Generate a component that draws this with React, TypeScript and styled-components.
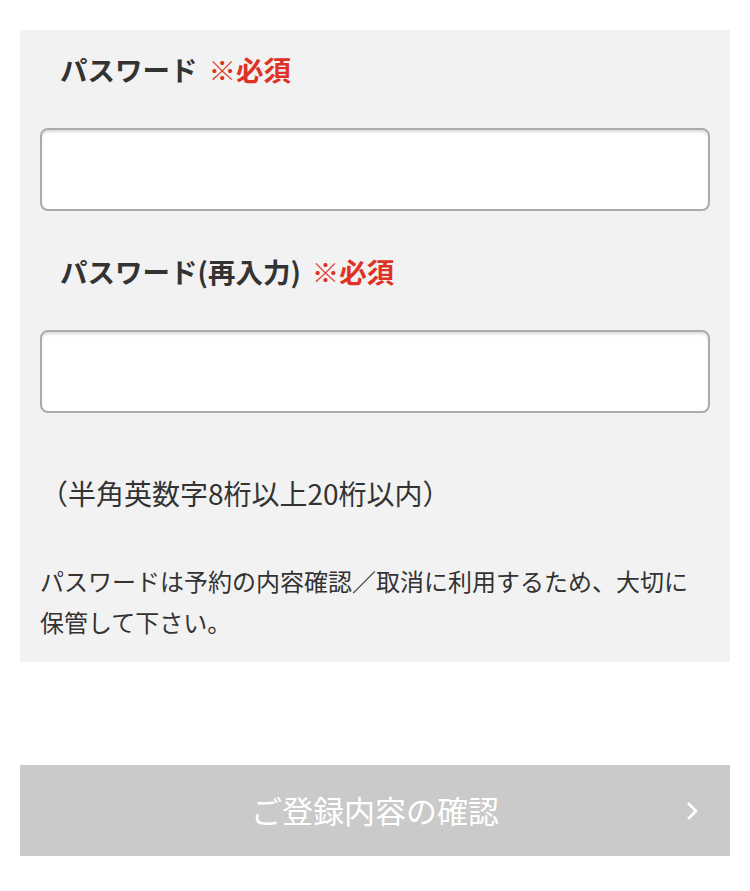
import React from "react";
import styled, { createGlobalStyle } from "styled-components";

const GlobalStyle = createGlobalStyle`
  html, body {
    margin: 0;
    padding: 0;
    background: #ffffff;
  }
  body {
    font-family: "Noto Sans CJK JP", "Noto Sans", sans-serif;
    color: #333333;
  }
  * {
    box-sizing: border-box;
  }
`;

const Page = styled.div`
  width: 750px;
  padding: 30px 20px 0;
`;

const Panel = styled.div`
  background: #f2f2f2;
  padding: 19px 20px 20px;
  display: flex;
  flex-direction: column;
`;

const Label = styled.div<{ $top: number }>`
  margin-top: ${(p) => p.$top}px;
  padding-left: 20px;
  font-size: 27.5px;
  font-weight: 700;
  line-height: 40px;
  color: #333333;
  white-space: nowrap;
`;

const Required = styled.span`
  color: #de3224;
  margin-left: 11px;
`;

const PasswordInput = styled.input`
  display: block;
  width: 100%;
  height: 83px;
  margin-top: 39px;
  border: 2px solid #ababab;
  border-radius: 8px;
  background: #ffffff;
  box-shadow: inset 0 3px 3px -1px rgba(0, 0, 0, 0.14);
  font-size: 26px;
  padding: 0 16px;
  outline: none;
`;

const Hint = styled.p`
  margin: 60px 0 0;
  font-size: 28px;
  line-height: 40px;
  color: #333333;
`;

const Note = styled.p`
  margin: 47px 0 0;
  font-size: 24px;
  line-height: 41px;
  color: #333333;
`;

const SubmitButton = styled.button`
  margin-top: 103px;
  width: 100%;
  height: 91px;
  border: none;
  background: #cacaca;
  color: #ffffff;
  font-family: "Noto Sans CJK JP", "Noto Sans", sans-serif;
  font-size: 31px;
  font-weight: 400;
  display: flex;
  align-items: center;
  justify-content: center;
  padding-bottom: 3px;
  position: relative;
  cursor: default;
`;

const Chevron = styled.svg`
  position: absolute;
  right: 31px;
  top: 50%;
  transform: translateY(-50%);
`;

export default function App() {
  return (
    <Page>
      <GlobalStyle />
      <Panel>
        <Label $top={0}>
          パスワード<Required>※必須</Required>
        </Label>
        <PasswordInput type="password" />
        <Label $top={40}>
          パスワード(再入力)<Required>※必須</Required>
        </Label>
        <PasswordInput type="password" />
        <Hint>（半角英数字8桁以上20桁以内）</Hint>
        <Note>
          パスワードは予約の内容確認／取消に利用するため、大切に保管して下さい。
        </Note>
      </Panel>
      <SubmitButton type="button">
        ご登録内容の確認
        <Chevron width="14" height="20" viewBox="0 0 14 20">
          <polyline
            points="3,2 11,10 3,18"
            fill="none"
            stroke="#ffffff"
            strokeWidth="2.6"
          />
        </Chevron>
      </SubmitButton>
    </Page>
  );
}
